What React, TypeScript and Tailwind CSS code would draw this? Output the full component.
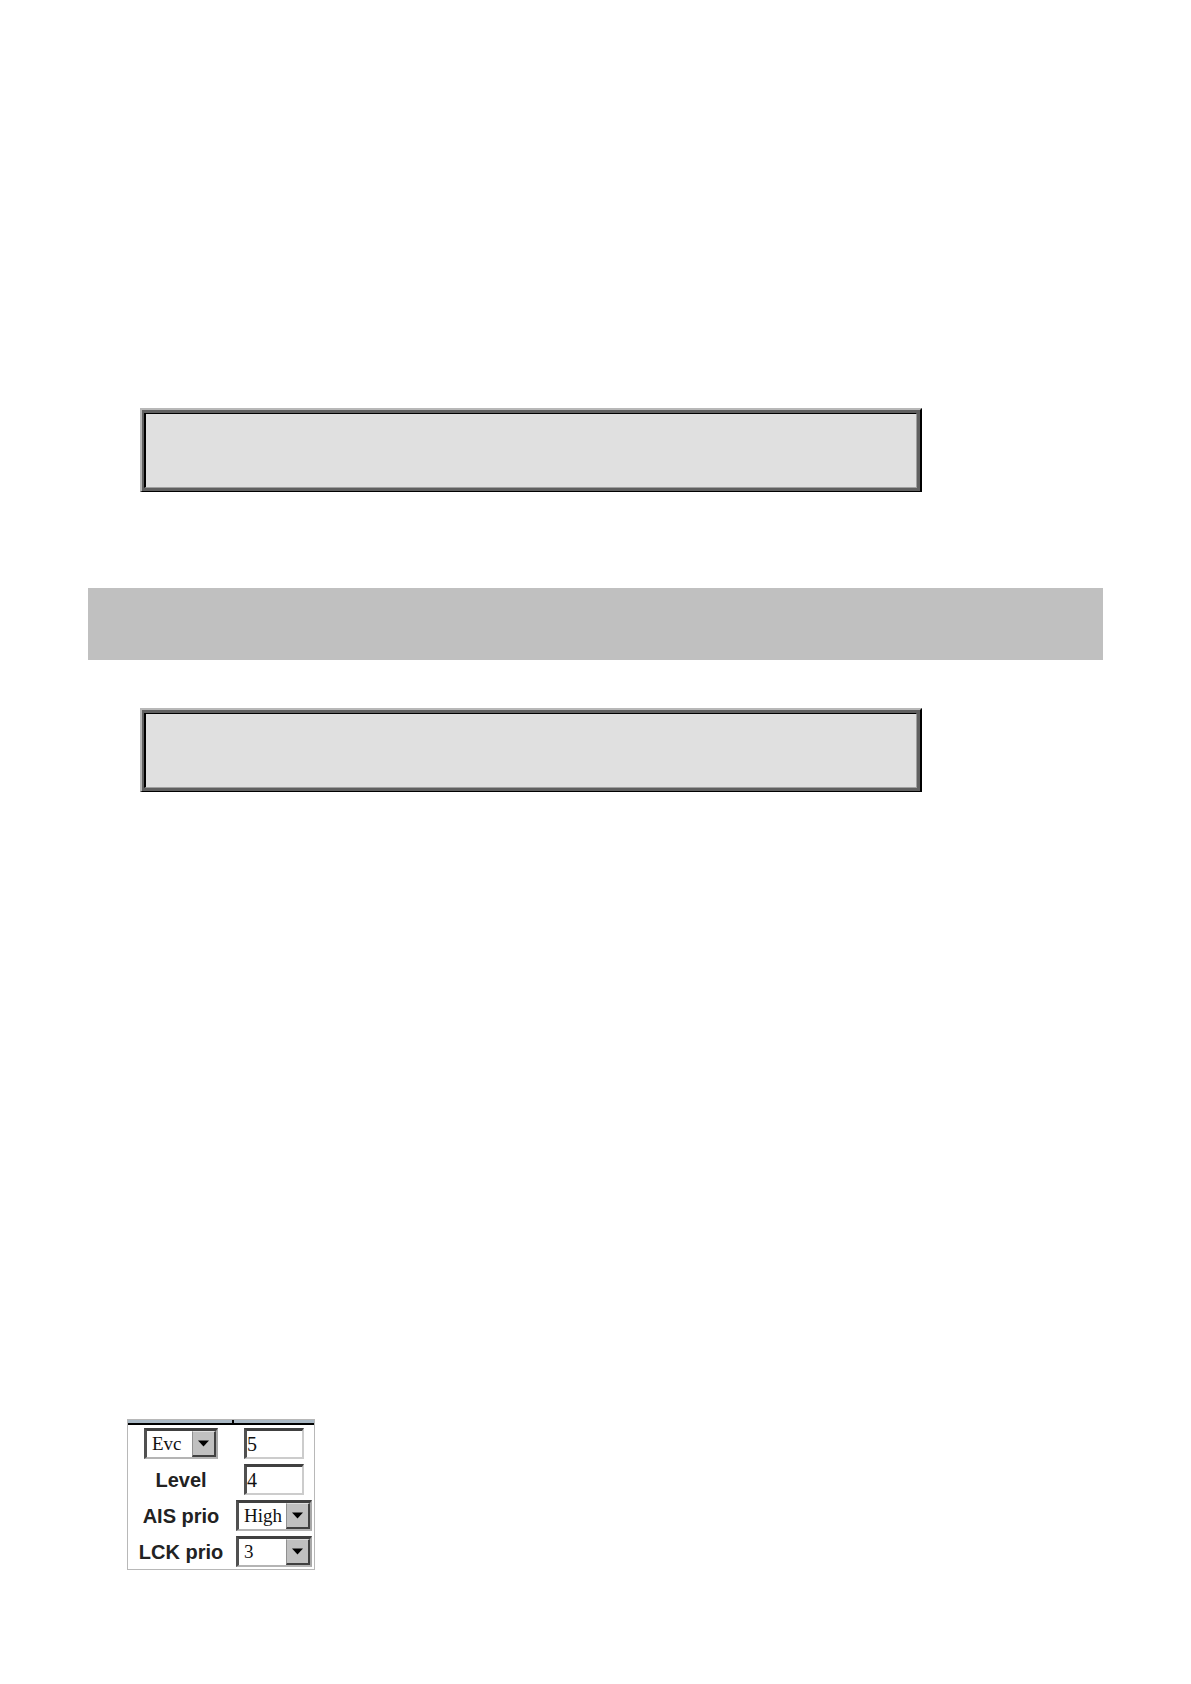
import React from 'react';

function BevelBox() {
  return (
    <div className="mx-13 max-w-[782px] border-t-2 border-r-2 border-b border-l-2 border-t-[#b8b8b8] border-r-black border-b-black border-l-[#b8b8b8]">
      <div className="border-t-3 border-r-3 border-b-3 border-l-2 border-[#606060]">
        <div className="h-[75px] border-t border-r border-b border-l-2 border-t-black border-r-[#a0a0a0] border-b-[#a0a0a0] border-l-black bg-[#e0e0e0]" />
      </div>
    </div>
  );
}

interface SelectBoxProps {
  id?: string;
  label?: string;
  value: string;
  options: string[];
  className: string;
}

function SelectBox({ id, label, value, options, className }: SelectBoxProps) {
  return (
    <div
      className={`relative h-[31px] border-t-3 border-r-2 border-b-2 border-l-3 border-t-[#404040] border-r-[#a8a8a8] border-b-[#b4b4b4] border-l-[#505050] bg-white ${className}`}
    >
      <select
        id={id}
        aria-label={label}
        defaultValue={value}
        className="block h-full w-full appearance-none bg-white pl-[5px] font-['Liberation_Serif',serif] text-[19px] leading-6 text-[#111111] outline-none"
      >
        {options.map((option) => (
          <option key={option}>{option}</option>
        ))}
      </select>
      <span className="pointer-events-none absolute inset-y-0 right-0 flex w-6 items-center justify-center border-t border-r-2 border-b-2 border-l border-t-[#dddddd] border-r-[#404040] border-b-[#404040] border-l-[#909090] bg-[#c0c0c0]">
        <svg className="h-[7px] w-[11px]" viewBox="0 0 11 7" fill="#000000">
          <path d="M0 0.5h11L5.5 6.5z" />
        </svg>
      </span>
    </div>
  );
}

function TextBox({ id, label, value }: { id?: string; label?: string; value: string }) {
  return (
    <input
      id={id}
      aria-label={label}
      type="text"
      defaultValue={value}
      className="block h-[31px] w-15 border-t-3 border-r-2 border-b-2 border-l-3 border-t-[#404040] border-r-[#cccccc] border-b-[#cccccc] border-l-[#505050] bg-white font-['Liberation_Serif',serif] text-xl leading-6 text-[#111111] outline-none"
    />
  );
}

function FieldLabel({ htmlFor, children }: { htmlFor: string; children: React.ReactNode }) {
  return (
    <label
      htmlFor={htmlFor}
      className="font-['Liberation_Sans',sans-serif] text-xl leading-6 font-bold whitespace-nowrap text-[#222222]"
    >
      {children}
    </label>
  );
}

function MepForm() {
  return (
    <form className="ml-[39px] w-[188px] border border-[#b8b8b8] bg-white">
      <div className="flex h-[5px] border-b-2 border-black bg-[#a9b8c4]">
        <div className="w-[106px] border-r-2 border-black" />
      </div>
      <div className="grid grid-cols-[106px_1fr] auto-rows-[31px] items-center justify-items-center gap-y-[5px] pt-[3px] pb-[2px]">
        <SelectBox label="Domain" value="Evc" options={['Port', 'Evc', 'Vlan']} className="w-[74px]" />
        <TextBox label="Instance" value="5" />

        <FieldLabel htmlFor="level">Level</FieldLabel>
        <TextBox id="level" value="4" />

        <FieldLabel htmlFor="ais-prio">AIS prio</FieldLabel>
        <SelectBox id="ais-prio" value="High" options={['Low', 'High']} className="w-[76px]" />

        <FieldLabel htmlFor="lck-prio">LCK prio</FieldLabel>
        <SelectBox
          id="lck-prio"
          value="3"
          options={['0', '1', '2', '3', '4', '5', '6', '7']}
          className="w-[76px]"
        />
      </div>
    </form>
  );
}

export default function App() {
  return (
    <main className="min-h-screen bg-white px-22 pt-[408px] pb-[114px]">
      <BevelBox />
      <div className="mt-24 mb-12 h-18 bg-[#c0c0c0]" />
      <BevelBox />
      <div className="mt-[627px]">
        <MepForm />
      </div>
    </main>
  );
}
